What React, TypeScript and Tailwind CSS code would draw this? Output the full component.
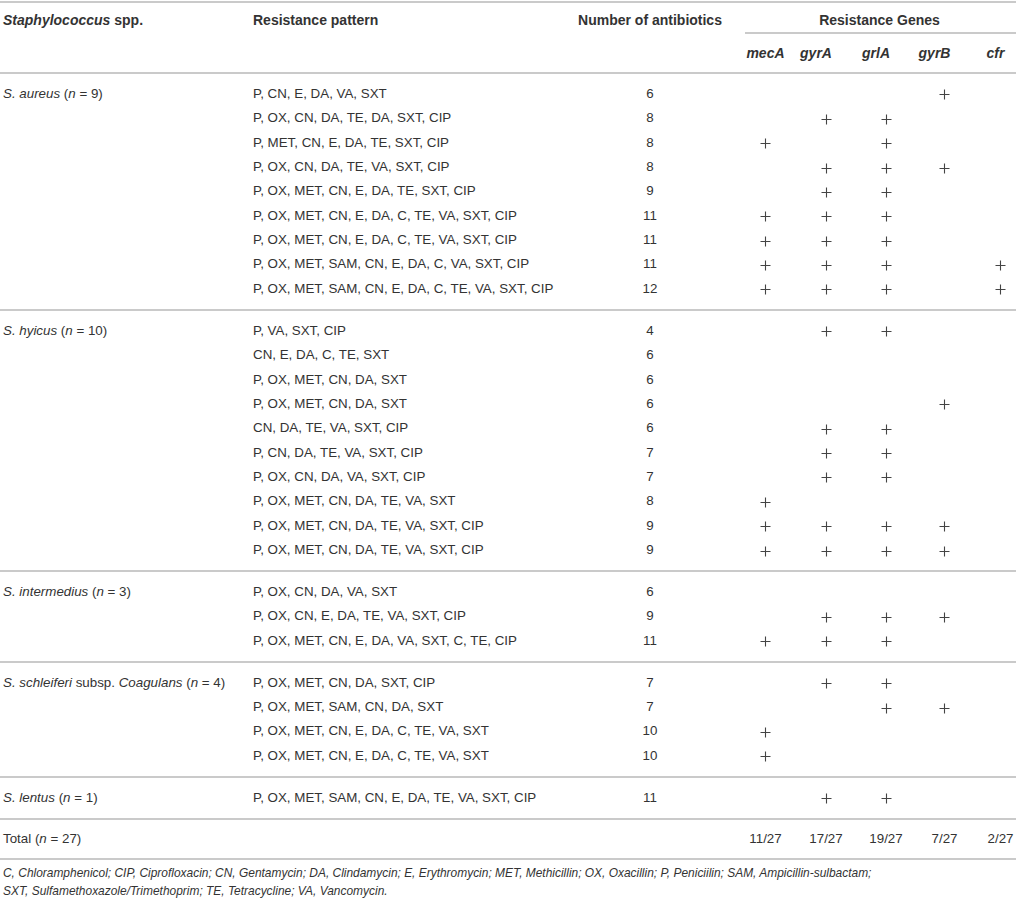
import React from "react";

type Row = { pattern: string; n: string; g: (0 | 1)[] };
type Group = { name: React.ReactNode; rows: Row[] };

const groups: Group[] = [
  {
    name: (
      <>
        <i>S. aureus</i> (<i>n</i> = 9)
      </>
    ),
    rows: [
      { pattern: "P, CN, E, DA, VA, SXT", n: "6", g: [0, 0, 0, 1, 0] },
      { pattern: "P, OX, CN, DA, TE, DA, SXT, CIP", n: "8", g: [0, 1, 1, 0, 0] },
      { pattern: "P, MET, CN, E, DA, TE, SXT, CIP", n: "8", g: [1, 0, 1, 0, 0] },
      { pattern: "P, OX, CN, DA, TE, VA, SXT, CIP", n: "8", g: [0, 1, 1, 1, 0] },
      { pattern: "P, OX, MET, CN, E, DA, TE, SXT, CIP", n: "9", g: [0, 1, 1, 0, 0] },
      { pattern: "P, OX, MET, CN, E, DA, C, TE, VA, SXT, CIP", n: "11", g: [1, 1, 1, 0, 0] },
      { pattern: "P, OX, MET, CN, E, DA, C, TE, VA, SXT, CIP", n: "11", g: [1, 1, 1, 0, 0] },
      { pattern: "P, OX, MET, SAM, CN, E, DA, C, VA, SXT, CIP", n: "11", g: [1, 1, 1, 0, 1] },
      { pattern: "P, OX, MET, SAM, CN, E, DA, C, TE, VA, SXT, CIP", n: "12", g: [1, 1, 1, 0, 1] },
    ],
  },
  {
    name: (
      <>
        <i>S. hyicus</i> (<i>n</i> = 10)
      </>
    ),
    rows: [
      { pattern: "P, VA, SXT, CIP", n: "4", g: [0, 1, 1, 0, 0] },
      { pattern: "CN, E, DA, C, TE, SXT", n: "6", g: [0, 0, 0, 0, 0] },
      { pattern: "P, OX, MET, CN, DA, SXT", n: "6", g: [0, 0, 0, 0, 0] },
      { pattern: "P, OX, MET, CN, DA, SXT", n: "6", g: [0, 0, 0, 1, 0] },
      { pattern: "CN, DA, TE, VA, SXT, CIP", n: "6", g: [0, 1, 1, 0, 0] },
      { pattern: "P, CN, DA, TE, VA, SXT, CIP", n: "7", g: [0, 1, 1, 0, 0] },
      { pattern: "P, OX, CN, DA, VA, SXT, CIP", n: "7", g: [0, 1, 1, 0, 0] },
      { pattern: "P, OX, MET, CN, DA, TE, VA, SXT", n: "8", g: [1, 0, 0, 0, 0] },
      { pattern: "P, OX, MET, CN, DA, TE, VA, SXT, CIP", n: "9", g: [1, 1, 1, 1, 0] },
      { pattern: "P, OX, MET, CN, DA, TE, VA, SXT, CIP", n: "9", g: [1, 1, 1, 1, 0] },
    ],
  },
  {
    name: (
      <>
        <i>S. intermedius</i> (<i>n</i> = 3)
      </>
    ),
    rows: [
      { pattern: "P, OX, CN, DA, VA, SXT", n: "6", g: [0, 0, 0, 0, 0] },
      { pattern: "P, OX, CN, E, DA, TE, VA, SXT, CIP", n: "9", g: [0, 1, 1, 1, 0] },
      { pattern: "P, OX, MET, CN, E, DA, VA, SXT, C, TE, CIP", n: "11", g: [1, 1, 1, 0, 0] },
    ],
  },
  {
    name: (
      <>
        <i>S. schleiferi</i> subsp. <i>Coagulans</i> (<i>n</i> = 4)
      </>
    ),
    rows: [
      { pattern: "P, OX, MET, CN, DA, SXT, CIP", n: "7", g: [0, 1, 1, 0, 0] },
      { pattern: "P, OX, MET, SAM, CN, DA, SXT", n: "7", g: [0, 0, 1, 1, 0] },
      { pattern: "P, OX, MET, CN, E, DA, C, TE, VA, SXT", n: "10", g: [1, 0, 0, 0, 0] },
      { pattern: "P, OX, MET, CN, E, DA, C, TE, VA, SXT", n: "10", g: [1, 0, 0, 0, 0] },
    ],
  },
  {
    name: (
      <>
        <i>S. lentus</i> (<i>n</i> = 1)
      </>
    ),
    rows: [
      { pattern: "P, OX, MET, SAM, CN, E, DA, TE, VA, SXT, CIP", n: "11", g: [0, 1, 1, 0, 0] },
    ],
  },
];

const GRID = "grid grid-cols-[253px_312px_170px_61px_60px_60px_57px_1fr]";

function Plus() {
  return (
    <svg width="11" height="11" viewBox="0 0 11 11" className="inline-block align-middle mt-[2px]">
      <path d="M5.5 0.5V10.5M0.5 5.5H10.5" stroke="#444444" strokeWidth="1.1" fill="none" />
    </svg>
  );
}

function GeneCells({ vals }: { vals: React.ReactNode[] }) {
  return (
    <>
      {vals.map((v, i) => (
        <div key={i} className={`flex justify-center ${i === 4 ? "pl-[12px]" : ""}`}>
          {v}
        </div>
      ))}
    </>
  );
}

export default function App() {
  return (
    <div
      className="w-[1016px] bg-white text-[13.35px] text-[#333333]"
      style={{ fontFamily: '"Liberation Sans", Arial, sans-serif' }}
    >
      <div className="h-[1px]" />
      <div className="border-t-2 border-[#cacaca]">
        {/* Header */}
        <div className={`${GRID} h-[71px] border-b-2 border-[#cacaca] font-bold text-[14px]`}>
          <div className="pl-[3px] pt-[8px] leading-[18px]">
            <i>Staphylococcus</i> spp.
          </div>
          <div className="pt-[8px] leading-[18px]">Resistance pattern</div>
          <div className="text-center pt-[8px] leading-[18px]">Number of antibiotics</div>
          <div className="col-span-5 flex flex-col">
            <div className="pt-[8px] leading-[18px] text-center pl-2 pb-[3px]">Resistance Genes</div>
            <div className="ml-[10px] border-t-2 border-[#cacaca]" />
            <div className="grid grid-cols-[51px_60px_60px_57px_1fr] pt-[10px] leading-[18px] italic">
              <div className="text-center pl-[10px]">mecA</div>
              <div className="text-center">gyrA</div>
              <div className="text-center">grlA</div>
              <div className="text-center">gyrB</div>
              <div className="text-center pl-[12px]">cfr</div>
            </div>
          </div>
        </div>

        {groups.map((grp, gi) => (
          <div key={gi} className="border-b-2 border-[#cacaca] pt-[7.8px] pb-[7.8px]">
            {grp.rows.map((r, ri) => (
              <div key={ri} className={`${GRID} h-[24.36px] items-center leading-[18px]`}>
                <div className="pl-[3px] whitespace-nowrap">{ri === 0 ? grp.name : null}</div>
                <div className="whitespace-nowrap">{r.pattern}</div>
                <div className="text-center">{r.n}</div>
                <GeneCells vals={r.g.map((x) => (x ? <Plus /> : null))} />
              </div>
            ))}
          </div>
        ))}

        {/* Total */}
        <div className={`${GRID} h-[40px] items-center border-b-2 border-[#cacaca] leading-[18px]`}>
          <div className="pl-[3px]">
            Total (<i>n</i> = 27)
          </div>
          <div />
          <div />
          <GeneCells vals={["11/27", "17/27", "19/27", "7/27", "2/27"]} />
        </div>

        {/* Footnote */}
        <div className="pl-[3px] pt-[4px] text-[11.95px] italic leading-[18px]">
          <div>
            C, Chloramphenicol; CIP, Ciprofloxacin; CN, Gentamycin; DA, Clindamycin; E, Erythromycin; MET,
            Methicillin; OX, Oxacillin; P, Peniciilin; SAM, Ampicillin-sulbactam;
          </div>
          <div>SXT, Sulfamethoxazole/Trimethoprim; TE, Tetracycline; VA, Vancomycin.</div>
        </div>
      </div>
    </div>
  );
}
